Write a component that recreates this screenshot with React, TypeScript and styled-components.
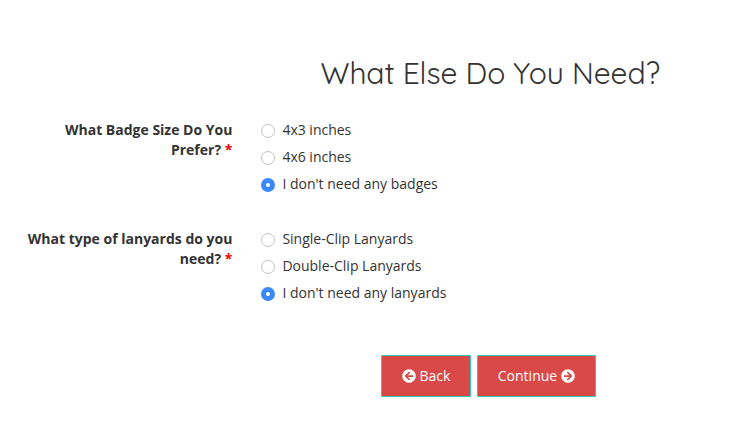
import { useState } from 'react';
import { FaArrowCircleLeft, FaArrowCircleRight } from 'react-icons/fa';
import styled, { createGlobalStyle } from 'styled-components';

const questions = [
  {
    name: 'badges',
    label: 'What Badge Size Do You Prefer?',
    options: ['4x3 inches', '4x6 inches', "I don't need any badges"],
  },
  {
    name: 'lanyards',
    label: 'What type of lanyards do you need?',
    options: [
      'Single-Clip Lanyards',
      'Double-Clip Lanyards',
      "I don't need any lanyards",
    ],
  },
];

const App = () => {
  const [answers, setAnswers] = useState<Record<string, number>>({
    badges: 2,
    lanyards: 2,
  });

  return (
    <>
      <GlobalStyle />
      <Form onSubmit={(e) => e.preventDefault()}>
        <Title>What Else Do You Need?</Title>
        <Questions>
          {questions.map(({ name, label, options }) => (
            <Question key={name} role="radiogroup">
              <Label>
                {label} <Required>*</Required>
              </Label>
              <Options>
                {options.map((option, index) => (
                  <Option key={option}>
                    <Radio
                      type="radio"
                      name={name}
                      checked={answers[name] === index}
                      onChange={() => setAnswers({ ...answers, [name]: index })}
                    />
                    {option}
                  </Option>
                ))}
              </Options>
            </Question>
          ))}
        </Questions>
        <Actions>
          <Button type="button" $width={90}>
            <FaArrowCircleLeft /> Back
          </Button>
          <Button type="submit" $width={119}>
            Continue <FaArrowCircleRight />
          </Button>
        </Actions>
      </Form>
    </>
  );
};

const GlobalStyle = createGlobalStyle`
  * {
    box-sizing: border-box;
  }

  body {
    margin: 0;
    background: #fff;
    color: #333;
    font: 14px/20px 'Open Sans', sans-serif;
  }
`;

const Form = styled.form`
  width: 748px;
  height: 423px;
  padding-top: 57px;
  overflow: hidden;
`;

const Title = styled.h1`
  margin: 0 0 30px 320.5px;
  font-family: Quicksand, Lato, sans-serif;
  font-size: 30px;
  font-weight: 400;
  line-height: 33px;
  letter-spacing: -0.08px;
  white-space: nowrap;
`;

const Questions = styled.div`
  display: flex;
  flex-direction: column;
  gap: 35px;
`;

const Question = styled.div`
  display: grid;
  grid-template-columns: 232.4px 1fr;
  column-gap: 28.6px;
`;

const Label = styled.div`
  padding-left: 20px;
  font-weight: 700;
  text-align: right;
`;

const Required = styled.span`
  color: #f00;
`;

const Options = styled.div`
  display: flex;
  flex-direction: column;
  gap: 7px;
`;

const Option = styled.label`
  display: flex;
  align-items: center;
  gap: 7.4px;
`;

const Radio = styled.input`
  appearance: none;
  width: 14px;
  height: 14px;
  margin: 2px 0 0;
  border: 1px solid #c2c2c2;
  border-radius: 50%;
  background: #fff;

  &:checked {
    border: 5px solid #3b88fd;
  }
`;

const Actions = styled.div`
  display: flex;
  gap: 6px;
  margin: 52px 0 0 381px;
`;

const Button = styled.button<{ $width: number }>`
  display: flex;
  align-items: center;
  justify-content: center;
  gap: 4px;
  width: ${({ $width }) => $width}px;
  height: 42px;
  padding: 0;
  border: 1px solid #2bcbba;
  border-radius: 1px;
  background: #d94948;
  color: #fff;
  font: inherit;
`;

export default App;
